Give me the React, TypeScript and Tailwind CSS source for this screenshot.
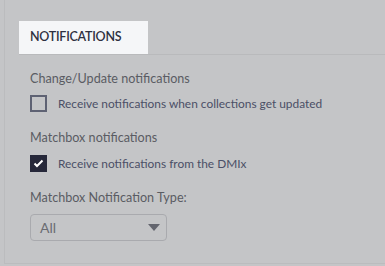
import { useState } from "react";

export default function App() {
  const [collections, setCollections] = useState(false);
  const [dmix, setDmix] = useState(true);

  return (
    <div className="h-[266px] w-[385px] bg-[#c4c5c7] font-['Lato',sans-serif]">
      <div className="h-[264px] border-b border-l border-[#bbbcbe] ml-[4px] pl-[14px]">
        <div className="pt-[21px] border-b border-[#b9babc]">
          <div className="flex h-[33px] w-[129px] items-center bg-[#f5f6f8] pl-[11px] text-[12.5px] font-semibold tracking-[-0.02em] text-[#2e3040]">
            NOTIFICATIONS
          </div>
        </div>

        <div className="pl-[11px] pt-[16px] text-[#5a5c63]">
          <p className="text-[12.6px] leading-[16px]">Change/Update notifications</p>
          <label className="mt-[8px] flex items-center gap-[11px]">
            <input
              type="checkbox"
              className="sr-only"
              checked={collections}
              onChange={() => setCollections((v) => !v)}
            />
            <span className="flex h-[17px] w-[17px] items-center justify-center border-2 border-[#5e6273]" />
            <span className="text-[11.9px] text-[#4b4f66]">
              Receive notifications when collections get updated
            </span>
          </label>

          <p className="mt-[17px] text-[12.6px] leading-[16px]">Matchbox notifications</p>
          <label className="mt-[9px] flex items-center gap-[11px]">
            <input
              type="checkbox"
              className="sr-only"
              checked={dmix}
              onChange={() => setDmix((v) => !v)}
            />
            <span className="flex h-[17px] w-[17px] items-center justify-center bg-[#26283a]">
              <svg width="11" height="9" viewBox="0 0 11 9" fill="none">
                <path d="M1.5 4.5 L4 7 L9.5 1.5" stroke="#fff" strokeWidth="2" />
              </svg>
            </span>
            <span className="text-[11.9px] text-[#4b4f66]">Receive notifications from the DMIx</span>
          </label>

          <p className="mt-[17px] text-[12.6px] leading-[16px]">Matchbox Notification Type:</p>
          <div className="mt-[8px] flex h-[27px] w-[137px] items-center justify-between rounded-[4px] border border-[#a9aaae] pl-[9px] pr-[6px]">
            <span className="text-[14px] text-[#6a6c72]">All</span>
            <svg width="12" height="7" viewBox="0 0 12 7">
              <path d="M0 0 H12 L6 7 Z" fill="#63656e" />
            </svg>
          </div>
        </div>
      </div>
    </div>
  );
}
